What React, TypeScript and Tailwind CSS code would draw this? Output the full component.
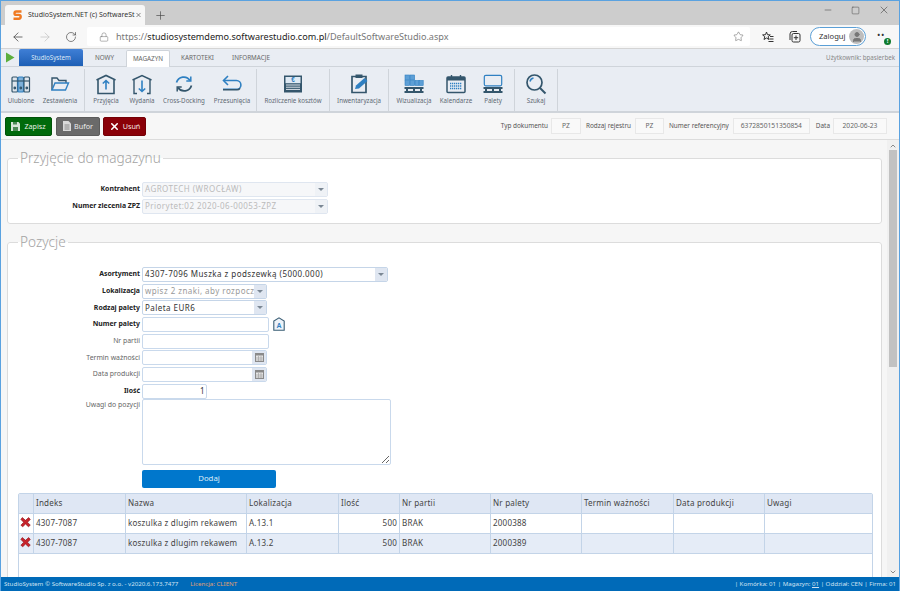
import React from "react";
import { ArrowLeft, ArrowRight, RotateCw, Lock, Star, Minus, Square, X, Plus, ChevronUp, ChevronDown, User } from "lucide-react";

const dark = "#34566c";
const blue = "#2f80c2";

const Svg = ({ children }: { children: React.ReactNode }) => (
  <svg width="22" height="22" viewBox="0 0 22 22" fill="none" strokeWidth="1.5" stroke={dark} className="block">{children}</svg>
);

const icons: Record<string, React.ReactNode> = {
  ulubione: (
    <svg width="20" height="20" viewBox="0 0 20 20" fill="none" stroke={dark} strokeWidth="1.2">
      <rect x="1" y="3" width="5.5" height="15" rx="1" fill="#dfe5ec" />
      <rect x="7" y="3" width="5.5" height="15" rx="1" fill="#7fb0d8" stroke={blue} />
      <rect x="13" y="3" width="5.5" height="15" rx="1" fill="#dfe5ec" />
      <path d="M1 7h18" />
      <circle cx="3.8" cy="14" r=".8" fill={dark} /><circle cx="9.8" cy="14" r=".8" fill={dark} /><circle cx="15.8" cy="14" r=".8" fill={dark} />
    </svg>
  ),
  zestawienia: (
    <svg width="20" height="20" viewBox="0 0 20 20" fill="none" stroke={blue} strokeWidth="1.4">
      <path d="M2 16V4h5l2 2.5h7V9" stroke={dark} />
      <path d="M2 16l3-7h13.5l-3 7z" />
    </svg>
  ),
  przyjecia: (
    <Svg>
      <path d="M1.5 7L11 2.5 20.5 7" strokeWidth="1.6" />
      <path d="M3 7v13.5h16V7" strokeWidth="1.6" />
      <path d="M11 16.5V7.5M7.8 10.5L11 7.5l3.2 3" stroke={blue} strokeWidth="1.6" />
    </Svg>
  ),
  wydania: (
    <Svg>
      <path d="M1.5 7L11 2.5 20.5 7" strokeWidth="1.4" />
      <path d="M3 7v13.5h3M19 7v13.5h-3" strokeWidth="1.4" />
      <path d="M11 7.5v11M7.8 15.5L11 18.5l3.2-3" stroke={blue} strokeWidth="1.6" />
    </Svg>
  ),
  cross: (
    <Svg>
      <path d="M3.5 9.5A7.5 7.5 0 0 1 17 7.5" stroke={blue} strokeWidth="1.7" />
      <path d="M18.5 12.5A7.5 7.5 0 0 1 5 14.5" strokeWidth="1.7" />
      <path d="M17.8 3.5v4.5h-4.5" stroke={blue} strokeWidth="1.5" />
      <path d="M4.2 18.5V14h4.5" strokeWidth="1.5" />
    </Svg>
  ),
  przesun: (
    <Svg>
      <path d="M7 3L2.5 7.5 7 12" stroke={blue} strokeWidth="1.6" />
      <path d="M3 7.5h12.5a4.3 4.3 0 0 1 0 8.8H2" strokeWidth="1.6" stroke={blue} />
      <path d="M2 16.8h14a4 4 0 0 0 3-1.6" strokeWidth="1.6" />
    </Svg>
  ),
  rozliczenie: (
    <svg width="20" height="20" viewBox="0 0 20 20" fill="none">
      <rect x="1" y="1.5" width="18" height="17" fill={dark} />
      <rect x="2.5" y="3" width="15" height="6.2" fill="#dfeaf4" />
      <text x="10" y="8.4" fontSize="6.5" textAnchor="middle" fill={blue} fontFamily="Liberation Sans" fontWeight="700">€</text>
      <path d="M3 11h14M3 13.2h14M3 15.4h14" stroke="#dfe5ec" strokeWidth="1" />
    </svg>
  ),
  inwent: (
    <svg width="20" height="22" viewBox="0 0 20 22" fill="none">
      <path d="M3 3.5h14v16H3z" stroke={dark} strokeWidth="1.7" />
      <rect x="6.5" y="1.5" width="7" height="3.5" fill={dark} />
      <path d="M6 16l1-3.5L15.5 5l3 3-8.5 7.5z" fill={blue} />
    </svg>
  ),
  wizual: (
    <svg width="20" height="20" viewBox="0 0 20 20" fill="none">
      <g fill="#5d9fd6" stroke={blue} strokeWidth=".6">
        <rect x="1" y="1" width="4.6" height="5" /><rect x="6" y="1" width="4.6" height="5" />
        <rect x="1" y="6.5" width="4.6" height="5" /><rect x="6" y="6.5" width="4.6" height="5" /><rect x="11" y="6.5" width="4" height="5" /><rect x="15.2" y="6.5" width="4" height="5" />
      </g>
      <rect x="0.5" y="13" width="19" height="2" fill={dark} />
      <rect x="0.5" y="17" width="19" height="2" fill={dark} />
      <path d="M3 15v2M10 15v2M17 15v2" stroke={dark} strokeWidth="2" />
    </svg>
  ),
  kalendarz: (
    <svg width="20" height="20" viewBox="0 0 20 20" fill="none">
      <rect x="1" y="3" width="18" height="15.5" rx="1" stroke={dark} strokeWidth="1.5" />
      <rect x="1" y="3" width="18" height="3.5" fill={dark} />
      <path d="M5.5 1v3.5M14.5 1v3.5" stroke={dark} strokeWidth="1.4" />
      <path d="M4 9.5h12M4 12h12M4 14.5h12" stroke={blue} strokeWidth="1.3" strokeDasharray="1.3 .7" />
    </svg>
  ),
  palety: (
    <svg width="20" height="20" viewBox="0 0 20 20" fill="none">
      <rect x="1.3" y="1.3" width="17.4" height="10.5" rx="1.5" stroke={blue} strokeWidth="1.2" />
      <rect x="0.5" y="13" width="19" height="2" fill={dark} />
      <rect x="0.5" y="17" width="19" height="2" fill={dark} />
      <path d="M3 15v2M10 15v2M17 15v2" stroke={dark} strokeWidth="2" />
    </svg>
  ),
  szukaj: (
    <Svg>
      <circle cx="9.5" cy="9.5" r="7.5" strokeWidth="1.7" />
      <path d="M15 15l5.5 5.5" strokeWidth="2" />
      <path d="M5 8.5a4.5 4.5 0 0 1 3.5-3.5" stroke={blue} strokeWidth="1.5" />
    </Svg>
  ),
};

const Item = ({ label, icon, w }: { label: string; icon: string; w: string }) => (
  <div className={`${w} flex flex-col items-center shrink-0`}>
    <div className="h-[23px] mt-[5px] flex items-center justify-center">{icons[icon]}</div>
    <div className="text-[6.2px] leading-[12px] text-[#5f6a74] whitespace-nowrap">{label}</div>
  </div>
);

const Sep = ({ ml = "" }: { ml?: string }) => <div className={`w-px h-[42px] mt-[2px] bg-[#cfd4da] shrink-0 ${ml}`} />;

const Labeled = ({ label, value, w }: { label: string; value: string; w: string }) => (
  <>
    <span className="text-[6.4px] text-[#555] whitespace-nowrap">{label}</span>
    <span className={`${w} h-[16px] bg-[#f9f9f9] border border-[#e8e8e8] text-[6.7px] text-[#666] flex items-center justify-center font-['DejaVu_Sans',sans-serif]`}>{value}</span>
  </>
);

const Label = ({ children, bold }: { children: React.ReactNode; bold?: boolean }) => (
  <div className={`w-[132px] shrink-0 text-right ${bold ? "text-[6.9px] font-bold text-[#222] font-['DejaVu_Sans',sans-serif]" : "text-[6.9px] text-[#666] font-['Open_Sans',sans-serif]"}`}>{children}</div>
);

const Arrow = ({ disabled }: { disabled?: boolean }) => (
  <span className={`w-[12px] h-full shrink-0 flex items-center justify-center ${disabled ? "bg-[#eff2f6]" : "bg-[#dfe6f1]"}`}>
    <span className="w-0 h-0 border-x-[3px] border-x-transparent border-t-[3px] border-t-[#7b8794]" />
  </span>
);

const boxText = "font-['DejaVu_Sans',sans-serif] text-[8px] tracking-[.45px]";

const Combo = ({ w, text, color, disabled }: { w: string; text: string; color: string; disabled?: boolean }) => (
  <div className={`${w} h-[15px] ml-[2px] flex items-center border rounded-[2px] overflow-hidden ${disabled ? "border-[#dfe6f0] bg-[#f6f7f9]" : "border-[#c5d5e8] bg-white"}`}>
    <span className={`flex-1 min-w-0 pl-[2px] whitespace-nowrap ${boxText} ${color}`}>{text}</span>
    <Arrow disabled={disabled} />
  </div>
);

const Input = ({ w, cal, value }: { w: string; cal?: boolean; value?: string }) => (
  <div className={`${w} h-[15px] ml-[2px] flex items-center border border-[#c9d9ec] rounded-[2px] bg-white overflow-hidden`}>
    <span className={`flex-1 text-right pr-[1px] ${boxText} text-[#333]`}>{value}</span>
    {cal && (
      <span className="w-[14px] h-full bg-[#dfe6f1] flex items-center justify-center">
        <svg width="9" height="9" viewBox="0 0 9 9">
          <rect x=".5" y=".5" width="8" height="8" fill="#e6e6e6" stroke="#8a8a8a" />
          <rect x=".5" y=".5" width="8" height="2" fill="#8a8a8a" />
          <path d="M1 5h7M1 7h7M3.5 3v5M6 3v5" stroke="#9a9a9a" strokeWidth=".6" />
        </svg>
      </span>
    )}
  </div>
);

const Row = ({ children }: { children: React.ReactNode }) => (
  <div className="flex items-center h-[16.7px]">{children}</div>
);

const Legend = ({ children }: { children: React.ReactNode }) => (
  <legend className="ml-[10px] px-[2px] text-[13.6px] leading-[16px] text-[#a3a3a3] font-['Open_Sans',sans-serif] font-light">{children}</legend>
);

const cols = ["w-[15px]", "w-[92px]", "w-[121px]", "w-[92px]", "w-[61px]", "w-[91px]", "w-[91px]", "w-[92px]", "w-[91px]", "flex-1"];
const heads = ["", "Indeks", "Nazwa", "Lokalizacja", "Ilość", "Nr partii", "Nr palety", "Termin ważności", "Data produkcji", "Uwagi"];
const rows = [
  ["4307-7087", "koszulka z dlugim rekawem", "A.13.1", "500", "BRAK", "2000388"],
  ["4307-7087", "koszulka z dlugim rekawem", "A.13.2", "500", "BRAK", "2000389"],
];

const TableRow = ({ cells, alt, head, del }: { cells: string[]; alt?: boolean; head?: boolean; del?: boolean }) => (
  <div className={`flex h-[20px] border-b border-[#c3d4e8] ${head ? "bg-[#dfe7f4]" : alt ? "bg-[#e5ecf7]" : "bg-white"}`}>
    {cols.map((c, i) => (
      <div key={i} className={`${c} shrink-0 h-full flex items-center border-r border-[#c3d4e8] last:border-r-0 px-[2px] whitespace-nowrap font-['DejaVu_Sans',sans-serif] text-[8.05px] tracking-[.2px] text-[#444] ${i === 4 && !head ? "justify-end" : ""}`}>
        {i === 0 && del ? (
          <svg width="13" height="12" viewBox="0 0 12 12" className="-mt-[3px] -ml-[1px]">
            <path d="M2.5 1.2L6 4.2l3.5-3L11.2 3.2 8.2 6.3l3 3.2-2 1.6L6 8.2 3 11.1 1 9.5l3-3.2-3-3.1z" fill="#c8242c" stroke="#8f1118" strokeWidth=".7" />
          </svg>
        ) : cells[i]}
      </div>
    ))}
  </div>
);

export default function App() {
  return (
    <div className="w-[900px] h-[591px] overflow-hidden flex flex-col border-x border-t border-[#5aa2e0] bg-white font-['Open_Sans',sans-serif]">
      {/* browser tab strip */}
      <div className="h-[24px] shrink-0 bg-[#cdcdcd] flex items-end pl-[4px]">
        <div className="w-[140px] h-[20px] bg-[#f7f7f7] rounded-t-[3px] flex items-center pl-[7px] pr-[3px]">
          <svg width="11" height="12" viewBox="0 0 11 12" className="shrink-0">
            <path d="M9.5 2.5H4.2a1.7 1.7 0 0 0 0 3.4h2.6a1.9 1.9 0 0 1 0 3.8H1.5" fill="none" stroke="#f07a22" strokeWidth="2.4" />
          </svg>
          <span className="ml-[5px] w-[104px] whitespace-nowrap text-[7px] text-[#333]">StudioSystem.NET (c) SoftwareSt</span>
          <X size={10} className="ml-[3px] text-[#333]" />
        </div>
        <div className="h-[20px] ml-[9px] flex items-center"><Plus size={13} strokeWidth={1.2} className="text-[#444]" /></div>
        <div className="flex-1" />
        <div className="h-full flex items-center gap-[18px] pr-[9px] pb-[6px] text-[#444]">
          <Minus size={10} strokeWidth={1.3} />
          <Square size={9} strokeWidth={1.3} />
          <X size={12} strokeWidth={1.2} />
        </div>
      </div>
      {/* browser toolbar */}
      <div className="h-[24px] shrink-0 bg-[#f7f7f7] border-b border-[#d4d4d4] flex items-center pl-[10px]">
        <ArrowLeft size={14} strokeWidth={1.3} className="text-[#444]" />
        <ArrowRight size={14} strokeWidth={1.3} className="ml-[13px] text-[#c4c4c4]" />
        <RotateCw size={12} strokeWidth={1.3} className="ml-[13px] text-[#444]" />
        <div className="ml-[10px] w-[663px] h-[19px] bg-white rounded-[2px] flex items-center pl-[12px]">
          <Lock size={10} strokeWidth={1.3} className="text-[#777]" />
          <span className="ml-[7px] text-[9.1px] leading-[14px] text-[#777] whitespace-nowrap">https://<span className="text-[#222]">studiosystemdemo.softwarestudio.com.pl</span>/DefaultSoftwareStudio.aspx</span>
          <div className="flex-1" />
          <Star size={11} strokeWidth={1.2} className="mr-[6px] text-[#666]" />
        </div>
        <svg width="12" height="12" viewBox="0 0 12 12" className="ml-[12px]" fill="none" stroke="#333" strokeWidth="1">
          <path d="M4.5 1l1 2.7 2.8.2-2.2 1.8.8 2.8L4.5 7 2 8.5l.8-2.8L.6 3.9l2.9-.2z" /><path d="M8 5.5h3.5M7.5 8h4M6.5 10.5h5" />
        </svg>
        <svg width="12" height="12" viewBox="0 0 12 12" className="ml-[15px]" fill="none" stroke="#333" strokeWidth="1">
          <rect x="3" y="2.5" width="8" height="8.5" rx="1.5" /><path d="M1 9V3a2.5 2.5 0 0 1 2.5-2.5H8M7 4.5v4.5M4.8 6.7h4.4" />
        </svg>
        <div className="ml-[9px] w-[56px] h-[19px] rounded-full border border-[#5b9fd6] bg-white flex items-center pl-[8px] pr-[1px]">
          <span className="text-[7.6px] text-[#333]">Zaloguj</span>
          <div className="ml-auto w-[15px] h-[15px] rounded-full bg-[#bdbdbd] flex items-center justify-center overflow-hidden"><User size={12} fill="#777" stroke="#777" /></div>
        </div>
        <div className="ml-[11px] relative w-[14px] h-[12px] flex items-center">
          <span className="text-[9px] leading-[4px] text-[#333] tracking-[.5px] -mt-[3px]">••</span>
          <span className="absolute right-0 bottom-[-2px] w-[7px] h-[7px] rounded-full bg-[#0f7b2e] text-white text-[6px] leading-[7px] text-center font-bold">!</span>
        </div>
      </div>
      {/* app tabs */}
      <div className="h-[18px] shrink-0 bg-[#e9edf3] border-b border-[#cfd4da] flex items-end pl-[4px]">
        <svg width="10" height="11" viewBox="0 0 10 11" className="mb-[3px] shrink-0"><path d="M1 .5L9.5 5.5 1 10.5z" fill="#5cae3c" /></svg>
        <div className="ml-[4px] w-[64px] h-[17px] bg-gradient-to-b from-[#3f7fd6] to-[#1d5fb5] rounded-t-[2px] flex items-center justify-center text-[6.2px] text-[#dfeaf8]">StudioSystem</div>
        <div className="w-[43px] h-[17px] flex items-center justify-center text-[6.3px] text-[#666]">NOWY</div>
        <div className="w-[44px] h-[17px] -mb-px bg-white border-x border-t border-[#cfd4da] rounded-t-[2px] flex items-center justify-center text-[6.3px] text-[#666]">MAGAZYN</div>
        <div className="w-[55px] h-[17px] flex items-center justify-center text-[6.3px] text-[#666]">KARTOTEKI</div>
        <div className="w-[52px] h-[17px] flex items-center justify-center text-[6.3px] text-[#666]">INFORMACJE</div>
        <div className="flex-1 h-full flex items-center justify-end pr-[4px] text-[6.2px] text-[#888]">Użytkownik: bpasierbek</div>
      </div>
      {/* ribbon */}
      <div className="h-[46px] shrink-0 bg-[#e9edf3] border-b-2 border-[#cfd4da] flex pl-[1px]">
        <Item label="Ulubione" icon="ulubione" w="w-[38px]" />
        <Item label="Zestawienia" icon="zestawienia" w="w-[40px]" />
        <Sep ml="ml-[4px]" />
        <div className="w-[3px]" />
        <Item label="Przyjęcia" icon="przyjecia" w="w-[36px]" />
        <Item label="Wydania" icon="wydania" w="w-[36px]" />
        <Item label="Cross-Docking" icon="cross" w="w-[48px]" />
        <Item label="Przesunięcia" icon="przesun" w="w-[48px]" />
        <Sep />
        <Item label="Rozliczenie kosztów" icon="rozliczenie" w="w-[72px]" />
        <Sep />
        <Item label="Inwentaryzacja" icon="inwent" w="w-[58px]" />
        <Sep />
        <div className="w-[3px]" />
        <Item label="Wizualizacja" icon="wizual" w="w-[44px]" />
        <Item label="Kalendarze" icon="kalendarz" w="w-[40px]" />
        <Item label="Palety" icon="palety" w="w-[34px]" />
        <div className="w-[4px]" />
        <Sep />
        <Item label="Szukaj" icon="szukaj" w="w-[42px]" />
        <Sep />
      </div>
      {/* action bar */}
      <div className="h-[27px] shrink-0 bg-[#f7f7f7] border-b border-[#dcdcdc] flex items-center pl-[4px] pr-[12px]">
        <button className="w-[47px] h-[19px] rounded-[2px] bg-[#006a0b] border border-[#005208] flex items-center justify-center gap-[4px] text-[7.2px] text-[#e6f0e6]">
          <svg width="9" height="9" viewBox="0 0 9 9"><path d="M0 0h7.5L9 1.5V9H0z" fill="#d8e6d8" /><rect x="2" y="5" width="5" height="4" fill="#4d8a55" /><rect x="2" y="0" width="4" height="2.5" fill="#4d8a55" /></svg>
          Zapisz
        </button>
        <button className="ml-[4px] w-[44px] h-[19px] rounded-[2px] bg-[#6a6a6a] border border-[#5c5c5c] flex items-center justify-center gap-[3px] text-[7.2px] text-[#eee]">
          <svg width="8" height="10" viewBox="0 0 8 10"><path d="M0 0h5.5L8 2.5V10H0z" fill="#d9d9d9" /><path d="M1.5 4h5M1.5 6h5M1.5 8h5" stroke="#777" strokeWidth=".8" /></svg>
          Bufor
        </button>
        <button className="ml-[3px] w-[43px] h-[19px] rounded-[2px] bg-[#8a0008] border border-[#740006] flex items-center justify-center gap-[3px] text-[7.2px] text-[#f5e6e6]">
          <X size={11} strokeWidth={3.4} className="text-white" />
          Usuń
        </button>
        <div className="flex-1" />
        <div className="flex items-center">
          <Labeled label="Typ dokumentu" value="PZ" w="ml-[3px] w-[30px]" />
          <div className="w-[5px]" />
          <Labeled label="Rodzaj rejestru" value="PZ" w="ml-[4px] w-[29px]" />
          <div className="w-[5px]" />
          <Labeled label="Numer referencyjny" value="6372850151350854" w="ml-[4px] w-[77px]" />
          <div className="w-[6px]" />
          <Labeled label="Data" value="2020-06-23" w="ml-[3px] w-[54px]" />
        </div>
      </div>
      {/* page */}
      <div className="flex-1 min-h-0 flex bg-[#f6f6f6]">
        <div className="flex-1 min-w-0 overflow-hidden pl-[6px] pr-[5px] pt-[10px]">
          <fieldset className="h-[74px] bg-white border border-[#dcdcdc] rounded-[3px]">
            <Legend>Przyjęcie do magazynu</Legend>
            <div className="pt-[15px]">
              <Row>
                <Label bold>Kontrahent</Label>
                <Combo w="w-[186px]" text="AGROTECH (WROCŁAW)" color="text-[#bbb]" disabled />
              </Row>
              <Row>
                <Label bold>Numer zlecenia ZPZ</Label>
                <Combo w="w-[186px]" text="Priorytet:02 2020-06-00053-ZPZ" color="text-[#bbb]" disabled />
              </Row>
            </div>
          </fieldset>
          <fieldset className="mt-[10px] bg-white border border-[#dcdcdc] rounded-[3px] h-[400px]">
            <Legend>Pozycje</Legend>
            <div className="pt-[16px]">
              <Row>
                <Label bold>Asortyment</Label>
                <Combo w="w-[246px]" text="4307-7096 Muszka z podszewką (5000.000)" color="text-[#333]" />
              </Row>
              <Row>
                <Label bold>Lokalizacja</Label>
                <Combo w="w-[125px]" text="wpisz 2 znaki, aby rozpocz" color="text-[#999]" />
              </Row>
              <Row>
                <Label bold>Rodzaj palety</Label>
                <Combo w="w-[125px]" text="Paleta EUR6" color="text-[#333]" />
              </Row>
              <Row>
                <Label bold>Numer palety</Label>
                <Input w="w-[127px]" />
                <svg width="12" height="14" viewBox="0 0 12 14" className="ml-[4px]">
                  <path d="M.8 13.2V4L6 .8 11.2 4v9.2z" fill="#eef3f9" stroke="#3a5d74" strokeWidth="1.1" />
                  <text x="6" y="11" fontSize="7" fontWeight="700" fill="#2f80c2" textAnchor="middle" fontFamily="Liberation Sans">A</text>
                </svg>
              </Row>
              <Row>
                <Label>Nr partii</Label>
                <Input w="w-[127px]" />
              </Row>
              <Row>
                <Label>Termin ważności</Label>
                <Input w="w-[125px]" cal />
              </Row>
              <Row>
                <Label>Data produkcji</Label>
                <Input w="w-[125px]" cal />
              </Row>
              <Row>
                <Label bold>Ilość</Label>
                <Input w="w-[65px]" value="1" />
              </Row>
              <div className="flex h-[66px] -mt-[1px] leading-[12px]">
                <Label>Uwagi do pozycji</Label>
                <textarea readOnly className="ml-[2px] w-[249px] h-[66px] border border-[#c9d9ec] rounded-[2px] bg-white" />
              </div>
              <div className="pl-[134px] mt-[5px]">
                <button className="block w-[134px] h-[18px] rounded-[2px] bg-[#0077cc] text-[7.8px] text-[#dcecf8]">Dodaj</button>
              </div>
              <div className="ml-[10px] mr-[8px] mt-[5px] border border-[#c3d4e8] rounded-[2px] h-[120px] bg-white">
                <TableRow cells={heads} head />
                {rows.map((r, i) => (
                  <TableRow key={i} cells={["", ...r, "", "", ""]} alt={i === 1} del />
                ))}
              </div>
            </div>
          </fieldset>
        </div>
        {/* scrollbar */}
        <div className="w-[12px] shrink-0 bg-[#f0f0f0] flex flex-col items-center">
          <ChevronUp size={8} className="mt-[2px] text-[#555]" />
          <div className="w-[8px] h-[217px] bg-[#c2c2c2]" />
          <div className="flex-1" />
          <ChevronDown size={8} className="mb-[1px] text-[#555]" />
        </div>
      </div>
      {/* footer */}
      <div className="h-[14px] shrink-0 bg-[#006ab8] flex items-center px-[3px] text-[6.15px] whitespace-nowrap">
        <span className="text-[#cfe2f2]">StudioSystem © SoftwareStudio Sp. z o.o. - v2020.6.173.7477</span>
        <span className="ml-[12px] text-[#e0a070]">Licencja: CLIENT</span>
        <span className="ml-auto text-[#cfe2f2]">| Komórka: 01 | Magazyn: <span className="underline">01</span> | Oddział: CEN | Firma: 01</span>
      </div>
    </div>
  );
}
